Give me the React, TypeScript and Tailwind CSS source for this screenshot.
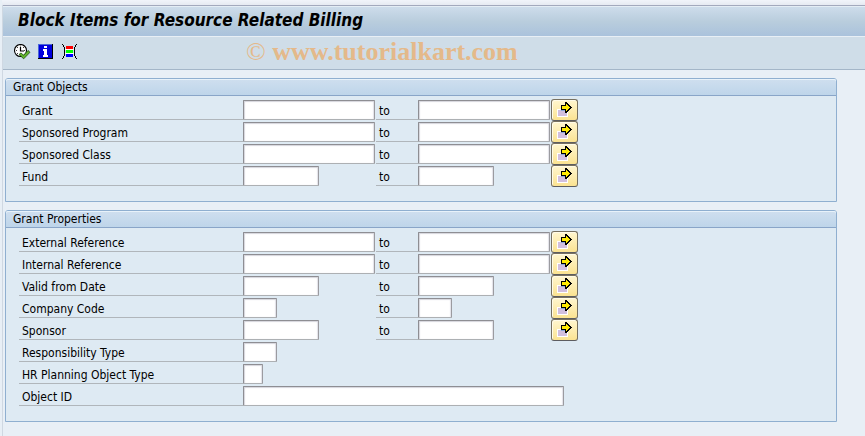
import type { ReactNode } from 'react'

type Size = 'xs' | 'sm' | 'md' | 'lg' | 'xl'

interface Field {
  id: string
  label: string
  size: Size
  range?: boolean
}

const SIZES: Record<Size, string> = {
  xs: 'w-5',
  sm: 'w-[34px]',
  md: 'w-[76px]',
  lg: 'w-[132px]',
  xl: 'w-[321px]',
}

const GRANT_OBJECTS: Field[] = [
  { id: 'grant', label: 'Grant', size: 'lg', range: true },
  { id: 'program', label: 'Sponsored Program', size: 'lg', range: true },
  { id: 'class', label: 'Sponsored Class', size: 'lg', range: true },
  { id: 'fund', label: 'Fund', size: 'md', range: true },
]

const GRANT_PROPERTIES: Field[] = [
  { id: 'external', label: 'External Reference', size: 'lg', range: true },
  { id: 'internal', label: 'Internal Reference', size: 'lg', range: true },
  { id: 'valid', label: 'Valid from Date', size: 'md', range: true },
  { id: 'company', label: 'Company Code', size: 'sm', range: true },
  { id: 'sponsor', label: 'Sponsor', size: 'md', range: true },
  { id: 'responsibility', label: 'Responsibility Type', size: 'sm' },
  { id: 'hr', label: 'HR Planning Object Type', size: 'xs' },
  { id: 'object', label: 'Object ID', size: 'xl' },
]

function ExecuteIcon() {
  return (
    <svg width="17" height="16" viewBox="0 0 17 16" aria-hidden="true">
      <circle cx="6.5" cy="6.5" r="6" fill="#fff" stroke="#000" strokeWidth="1.1" />
      <path
        d="M6 2h1M6 11h1M2 6.5h1M10 6.5h1M3 3.5h1M9 3.5h1M3 9.5h1"
        stroke="#444"
      />
      <path d="M6.5 3v4H10" fill="none" stroke="#000" strokeWidth="1.2" />
      <path
        d="M5 10.5L7 9l2.5 2.2L14 6.5l2 1.8L9.7 14.8z"
        fill="#62b52c"
        stroke="#1c4c10"
        strokeWidth="0.8"
      />
    </svg>
  )
}

function InfoIcon() {
  return (
    <svg
      width="15"
      height="15"
      viewBox="0 0 15 15"
      shapeRendering="crispEdges"
      aria-hidden="true"
    >
      <path fill="#000" d="M0 0h15v15H0z" />
      <path fill="#4a66d8" d="M0 0h14v1H1v13H0z" />
      <path fill="#00d" d="M1 1h13v13H1z" />
      <path fill="#fff" d="M6 2h3v2H6zM5 5h4v6h1v2H5v-2h1V7H5z" />
    </svg>
  )
}

function SelectionIcon() {
  return (
    <svg
      width="15"
      height="15"
      viewBox="0 0 15 15"
      shapeRendering="crispEdges"
      aria-hidden="true"
    >
      <path
        fill="#000"
        d="M0 0h1v1H0zM1 1h1v2H1zM2 3h1v9H2zM1 12h1v2H1zM0 14h1v1H0zM14 0h1v1h-1zM13 1h1v2h-1zM12 3h1v9h-1zM13 12h1v2h-1zM14 14h1v1h-1z"
      />
      <path fill="#f00" d="M4 2h7v3H4z" />
      <path fill="#0f0" d="M4 6h7v3H4z" />
      <path fill="#00f" d="M4 10h7v3H4z" />
      <path fill="#fff" d="M3 5h9v1H3zM3 9h9v1H3z" />
    </svg>
  )
}

function MultipleIcon() {
  return (
    <svg
      width="15"
      height="15"
      viewBox="0 0 15 15"
      shapeRendering="crispEdges"
      aria-hidden="true"
    >
      <path fill="#fff" d="M0 7h11v8H0z" />
      <path fill="#d2bfde" d="M1 8h9v6H1z" />
      <path fill="#8ba6d8" d="M4 8h5v1H4z" />
      <path
        fill="#000"
        d="M8 0h2v1h1v1h1v1h1v1h1v1h1v1h-1v1h-1v1h-1v1h-1v1h-1v1H8V8H4V3h4z"
      />
      <path
        fill="#ffea00"
        d="M9 2h1v1h1v1h1v1h1v1h-1v1h-1v1h-1v1H9V7H5V4h4z"
      />
    </svg>
  )
}

function TextField({ id, size }: { id: string; size: Size }) {
  return (
    <input
      id={id}
      type="text"
      className={`${SIZES[size]} mt-px h-5 rounded-[1px] border border-t-[#8e8e93] border-r-[#9b9ba0] border-b-[#adb0b3] border-l-[#8e8e93] bg-white px-1 text-xs shadow-[inset_1px_1px_1px_#d5d5dc,inset_-1px_0_1px_#e2e2e8] outline-none`}
    />
  )
}

function FieldRow({ field }: { field: Field }) {
  const { id, label, size, range } = field
  return (
    <div className="flex h-[22px] items-start">
      <label
        htmlFor={id}
        className="h-[21px] w-56 shrink-0 border-b border-[#b0b6bb] pl-[3px] leading-6"
      >
        {label}
      </label>
      <div className="flex min-w-[133px] shrink-0">
        <TextField id={id} size={size} />
      </div>
      {range && (
        <>
          <label
            htmlFor={`${id}-to`}
            className="h-[21px] w-[42px] shrink-0 border-b border-[#b0b6bb] pl-[3px] leading-6"
          >
            to
          </label>
          <div className="flex w-[133px] shrink-0">
            <TextField id={`${id}-to`} size={size} />
          </div>
          <button
            type="button"
            aria-label={`Multiple selection for ${label}`}
            className="flex h-[22px] w-[27px] shrink-0 justify-center rounded-[3px] border border-[#77705f] border-b-[#5d5d60] bg-linear-to-b from-[#fff6cf] to-[#fbe391] pt-0.5 shadow-[inset_1px_1px_0_#fffbe8]"
          >
            <MultipleIcon />
          </button>
        </>
      )}
    </div>
  )
}

function Group({ title, fields }: { title: string; fields: Field[] }) {
  return (
    <section className="rounded-t-[3px] border border-[#8fafd0] bg-[#deeaf3]">
      <h2 className="h-[17px] rounded-t-[2px] border-b border-[#89a5c8] bg-linear-to-b from-[#cfdfef] to-[#bed5ea] pl-[7px] leading-4 shadow-[inset_0_1px_0_#e8f2fa]">
        {title}
      </h2>
      <div className="pt-[3px] pb-3.5 pl-[13px]">
        {fields.map((field) => (
          <FieldRow key={field.id} field={field} />
        ))}
      </div>
    </section>
  )
}

function ToolButton({ label, children }: { label: string; children: ReactNode }) {
  return (
    <button type="button" aria-label={label} className="flex w-6 pt-[7px]">
      {children}
    </button>
  )
}

export default function App() {
  return (
    <div className="min-h-screen bg-[#e8eff6] pl-0.5 font-['DejaVu_Sans_Condensed','DejaVu_Sans',sans-serif] text-xs text-black">
      <div className="h-[5px] bg-linear-to-b from-[#f1f4fa] to-[#e6eaf2]" />
      <div className="min-h-[431px] border-l border-[#cfd8e2]">
        <header className="border-t border-[#a3a9bd]">
          <h1 className="h-[30px] border-t border-[#e4edf5] bg-linear-to-b from-[#cddceb] via-[#b9cddd] to-[#aac2dc] pl-[15px] text-[17px] leading-[26px] font-bold italic">
            Block Items for Resource Related Billing
          </h1>
          <div className="flex h-[34px] border-t border-b border-t-[#e8eff5] border-b-[#a4b6c8] bg-[#cfdde8] pl-[11px]">
            <ToolButton label="Execute">
              <ExecuteIcon />
            </ToolButton>
            <ToolButton label="Information">
              <InfoIcon />
            </ToolButton>
            <ToolButton label="Selection options">
              <SelectionIcon />
            </ToolButton>
            <p className="ml-40 font-['Liberation_Serif',serif] text-[26px] leading-[30px] text-[#e4b98a]">
              © <b>www.tutorialkart.com</b>
            </p>
          </div>
        </header>
        <main className="flex flex-col gap-2 pt-2 pr-7 pl-0.5">
          <Group title="Grant Objects" fields={GRANT_OBJECTS} />
          <Group title="Grant Properties" fields={GRANT_PROPERTIES} />
        </main>
      </div>
    </div>
  )
}
